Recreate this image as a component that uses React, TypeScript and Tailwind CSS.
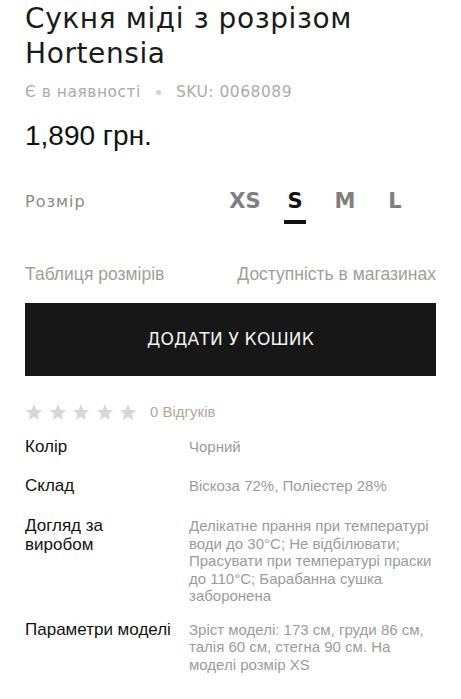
import React from "react";

const Star = () => (
  <svg width="18" height="18" viewBox="0 0 24 24" className="shrink-0">
    <path
      d="M12 1.8l3.1 7.1 7.7.7-5.8 5.1 1.7 7.6L12 18.3l-6.7 4 1.7-7.6-5.8-5.1 7.7-.7z"
      fill="#d7d7d7"
    />
  </svg>
);

const sizes = ["XS", "S", "M", "L"];

export default function App() {
  const mont = { fontFamily: '"DejaVu Sans", sans-serif' };
  return (
    <div
      className="w-[461px] h-[699px] bg-white overflow-hidden px-[25px]"
      style={{ fontFamily: '"Liberation Sans", Arial, sans-serif' }}
    >
      <h1
        className="mt-[1px] text-[28px] leading-[35px] font-normal tracking-[0.6px] text-[#1a1a1a]"
        style={mont}
      >
        Сукня міді з розрізом Hortensia
      </h1>

      <div
        className="mt-[11px] flex items-center text-[15.5px] leading-[20px] tracking-[0.5px] text-[#ababab]"
        style={mont}
      >
        <span>Є в наявності</span>
        <span className="mx-[15px] w-[5px] h-[5px] rounded-full bg-[#d2d2d2]" />
        <span>SKU: 0068089</span>
      </div>

      <div className="mt-[17px] text-[28px] leading-[34px] text-[#111]">
        1,890 грн.
      </div>

      <div className="mt-[35px] flex items-start">
        <div
          className="w-[195px] pt-[1px] text-[16px] leading-[26px] tracking-[1px] text-[#8a8a8a]"
          style={mont}
        >
          Розмір
        </div>
        {sizes.map((s) => (
          <div key={s} className="w-[50px] flex flex-col items-center">
            <span
              className={
                "text-[21px] leading-[26px] font-semibold " +
                (s === "S" ? "text-[#111]" : "text-[#7f7f7f]")
              }
              style={mont}
            >
              {s}
            </span>
            <span
              className={
                "mt-[6px] w-[22px] h-[4px] " +
                (s === "S" ? "bg-[#111]" : "bg-transparent")
              }
            />
          </div>
        ))}
      </div>

      <div className="mt-[40px] flex justify-between text-[17.5px] leading-[21px] text-[#a39e95]">
        <span>Таблиця розмірів</span>
        <span>Доступність в магазинах</span>
      </div>

      <button
        className="mt-[18px] w-full h-[73px] bg-[#171717] flex items-center justify-center text-[17px] text-[#f2f2f2] tracking-[0.2px]"
        style={mont}
      >
        ДОДАТИ У КОШИК
      </button>

      <div className="mt-[27px] h-[18px] flex items-center">
        <div className="flex gap-[5.5px]">
          <Star />
          <Star />
          <Star />
          <Star />
          <Star />
        </div>
        <span className="ml-[13px] text-[15px] leading-[18px] text-[#b2a99b]">
          0 Відгуків
        </span>
      </div>

      <div className="mt-[16px] flex flex-col">
        <div className="flex items-baseline">
          <div className="w-[164px] shrink-0 text-[17px] leading-[19px] text-[#111]">
            Колір
          </div>
          <div className="text-[15px] leading-[17.5px] text-[#9b9b9b]">
            Чорний
          </div>
        </div>

        <div className="mt-[20px] flex items-baseline">
          <div className="w-[164px] shrink-0 text-[17px] leading-[19px] text-[#111]">
            Склад
          </div>
          <div className="text-[15px] leading-[17.5px] text-[#9b9b9b]">
            Віскоза 72%, Поліестер 28%
          </div>
        </div>

        <div className="mt-[21px] flex items-baseline">
          <div className="w-[164px] shrink-0 text-[17px] leading-[19px] text-[#111]">
            Догляд за
            <br />
            виробом
          </div>
          <div className="text-[15px] leading-[17.5px] text-[#9b9b9b] whitespace-nowrap">
            Делікатне прання при температурі
            <br />
            води до 30°C; Не відбілювати;
            <br />
            Прасувати при температурі праски
            <br />
            до 110°C; Барабанна сушка
            <br />
            заборонена
          </div>
        </div>

        <div className="mt-[15px] flex items-baseline">
          <div className="w-[164px] shrink-0 text-[17px] leading-[19px] text-[#111] whitespace-nowrap">
            Параметри моделі
          </div>
          <div className="text-[15px] leading-[17.5px] text-[#9b9b9b] whitespace-nowrap">
            Зріст моделі: 173 см, груди 86 см,
            <br />
            талія 60 см, стегна 90 см. На
            <br />
            моделі розмір XS
          </div>
        </div>
      </div>
    </div>
  );
}
